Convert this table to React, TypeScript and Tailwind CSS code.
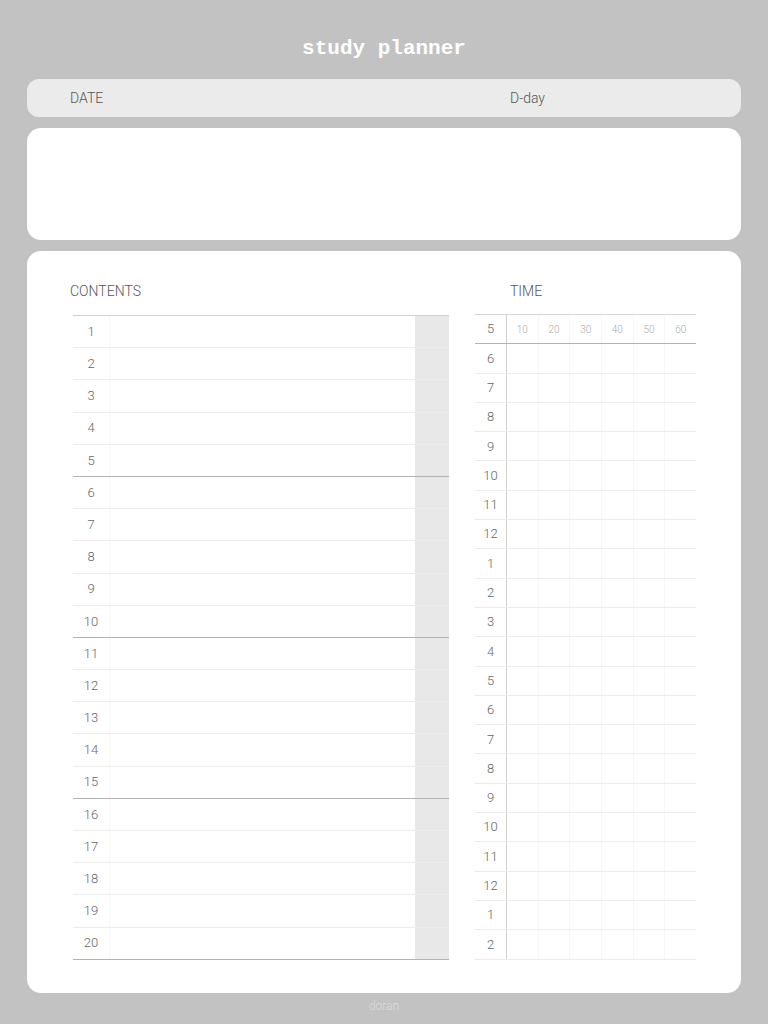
import React from "react"

const contents = Array.from({ length: 20 }, (_, i) => i + 1)
const hours = [6, 7, 8, 9, 10, 11, 12, 1, 2, 3, 4, 5, 6, 7, 8, 9, 10, 11, 12, 1, 2]
const minutes = [10, 20, 30, 40, 50, 60]

export default function App() {
  return (
    <div
      className="min-h-[1024px] w-[768px] bg-[#c2c2c2] px-[27px]"
      style={{ fontFamily: "Roboto, 'Noto Sans', sans-serif" }}
    >
      {/* title */}
      <div className="h-[79px] pt-[37px] text-center">
        <h1
          className="text-[21px] font-bold leading-[24px] text-white"
          style={{ fontFamily: "'Liberation Mono', 'Courier New', monospace" }}
        >
          study planner
        </h1>
      </div>

      {/* date bar */}
      <div className="flex h-[38px] items-center rounded-[12px] bg-[#ebebeb] text-[14px] font-light text-[#555]">
        <span className="w-[483px] pl-[43px]">DATE</span>
        <span>D-day</span>
      </div>

      {/* memo */}
      <div className="mt-[11px] h-[112px] rounded-[14px] bg-white" />

      {/* main */}
      <div className="mt-[11px] flex h-[742px] rounded-[14px] bg-white pl-[46px] pr-[45px] pt-[32px]">
        {/* contents */}
        <div className="w-[376px]">
          <p className="-ml-[3px] h-[32px] text-[14px] font-light leading-[16px] text-[#555]">CONTENTS</p>
          <div className="border-t border-[#cfcfcf]">
            {contents.map((n) => (
              <div
                key={n}
                className={`flex h-[32.2px] border-b ${n % 5 === 0 ? "border-[#b3b3b3]" : "border-[#ececec]"}`}
              >
                <div className="flex w-[37px] items-center justify-center border-r border-[#f8f8f8] text-[13px] font-light text-[#666]">
                  {n}
                </div>
                <div className="flex-1" />
                <div className="w-[34px] bg-[#e8e8e8]" />
              </div>
            ))}
          </div>
        </div>

        {/* time */}
        <div className="ml-[26px] w-[221px]">
          <p className="h-[31px] pl-[35px] text-[14px] font-light leading-[16px] text-[#555]">TIME</p>
          <div className="border-t border-[#d6d6d6]">
            <div className="flex h-[29.3px] border-b border-[#b3b3b3]">
              <div className="flex w-[32px] items-center justify-center border-r border-[#d0d0d0] text-[13px] font-light text-[#666]">
                5
              </div>
              {minutes.map((m) => (
                <div
                  key={m}
                  className="flex flex-1 items-center justify-center border-r border-[#f7f7f7] text-[10px] font-light text-[#aaa] last:border-r-0"
                >
                  {m}
                </div>
              ))}
            </div>
            {hours.map((h, i) => (
              <div key={i} className="flex h-[29.3px] border-b border-[#ececec]">
                <div className="flex w-[32px] items-center justify-center border-r border-[#d0d0d0] text-[13px] font-light text-[#666]">
                  {h}
                </div>
                {minutes.map((m) => (
                  <div key={m} className="flex-1 border-r border-[#f7f7f7] last:border-r-0" />
                ))}
              </div>
            ))}
          </div>
        </div>
      </div>

      <p className="pt-[4px] text-center text-[12px] font-light text-[#dcdcdc]">doran</p>
    </div>
  )
}
